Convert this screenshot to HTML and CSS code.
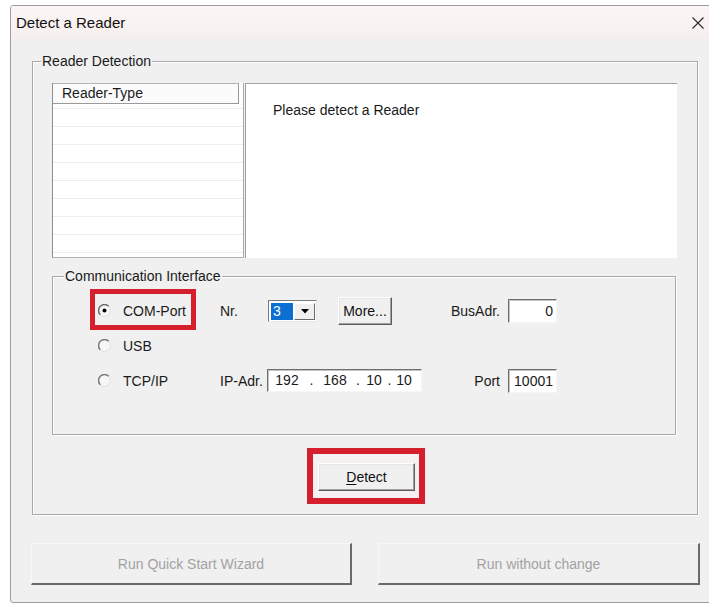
FILE: index.html
```html
<!DOCTYPE html>
<html lang="en">
<head>
<meta charset="utf-8">
<title>Detect a Reader</title>
<link rel="stylesheet" href="styles.css">
</head>
<body>
<div class="window">
  <div class="titlebar">
    <span class="title">Detect a Reader</span>
    <svg class="close" width="12" height="12" viewBox="0 0 12 12"><path d="M0.5 0.5L11.5 11.5M11.5 0.5L0.5 11.5" stroke="#2b2b2b" stroke-width="1.1"/></svg>
  </div>
  <div class="client">
    <div class="group main-group">
      <span class="legend">Reader Detection</span>
      <div class="top-area">
        <div class="listview">
          <div class="lv-header">Reader-Type</div>
          <div class="lv-row first"></div>
          <div class="lv-row"></div>
          <div class="lv-row"></div>
          <div class="lv-row"></div>
          <div class="lv-row"></div>
          <div class="lv-row"></div>
          <div class="lv-row"></div>
          <div class="lv-row"></div>
          <div class="lv-row"></div>
        </div>
        <div class="info-panel">Please detect a Reader</div>
      </div>

      <div class="group comm-group">
        <span class="legend">Communication Interface</span>
        <div class="row">
          <label class="opt marked">
            <svg class="radio" width="13" height="13" viewBox="0 0 13 13"><circle cx="6.5" cy="6.5" r="6" fill="#f7f7f7"/><path d="M10.7 2.3A5.8 5.8 0 0 1 2.3 10.7" fill="none" stroke="#e0e0e0" stroke-width="1"/><path d="M2.3 10.7A5.8 5.8 0 0 1 10.7 2.3" fill="none" stroke="#6c6c6c" stroke-width="1.5"/><circle cx="6.5" cy="6.5" r="2" fill="#000"/></svg>
            COM-Port
          </label>
          <span class="lbl">Nr.</span>
          <div class="combo">
            <span class="combo-value">3</span>
            <span class="combo-btn"><svg width="8" height="5" viewBox="0 0 8 5"><path d="M0 0H8L4 4.5Z" fill="#000"/></svg></span>
          </div>
          <button class="btn more">More...</button>
          <div class="right-field">
            <span class="lbl-r">BusAdr.</span>
            <div class="edit num">0</div>
          </div>
        </div>
        <div class="row">
          <label class="opt">
            <svg class="radio" width="13" height="13" viewBox="0 0 13 13"><circle cx="6.5" cy="6.5" r="6" fill="#f7f7f7"/><path d="M10.7 2.3A5.8 5.8 0 0 1 2.3 10.7" fill="none" stroke="#e0e0e0" stroke-width="1"/><path d="M2.3 10.7A5.8 5.8 0 0 1 10.7 2.3" fill="none" stroke="#7a7a7a" stroke-width="1.5"/></svg>
            USB
          </label>
        </div>
        <div class="row">
          <label class="opt">
            <svg class="radio" width="13" height="13" viewBox="0 0 13 13"><circle cx="6.5" cy="6.5" r="6" fill="#f7f7f7"/><path d="M10.7 2.3A5.8 5.8 0 0 1 2.3 10.7" fill="none" stroke="#e0e0e0" stroke-width="1"/><path d="M2.3 10.7A5.8 5.8 0 0 1 10.7 2.3" fill="none" stroke="#7a7a7a" stroke-width="1.5"/></svg>
            TCP/IP
          </label>
          <span class="lbl">IP-Adr.</span>
          <div class="edit ip">
            <span class="seg s1">192</span><span class="dot d1">.</span><span class="seg s2">168</span><span class="dot d2">.</span><span class="seg s3">10</span><span class="dot d3">.</span><span class="seg s4">10</span>
          </div>
          <div class="right-field">
            <span class="lbl-r">Port</span>
            <div class="edit num">10001</div>
          </div>
        </div>
      </div>

      <div class="detect-mark">
        <button class="btn detect"><u>D</u>etect</button>
      </div>
    </div>

    <div class="actions">
      <button class="btn wide" disabled>Run Quick Start Wizard</button>
      <button class="btn wide second" disabled>Run without change</button>
    </div>
  </div>
</div>
</body>
</html>
```

FILE: styles.css
```css
*,
*::before,
*::after {
  box-sizing: border-box;
}

html,
body {
  margin: 0;
  padding: 0;
}

body {
  width: 709px;
  height: 605px;
  overflow: hidden;
  background: #ffffff;
  font-family: "Liberation Sans", Arial, sans-serif;
  font-size: 14px;
  color: #1a1a1a;
}

/* dialog frame */
.window {
  margin: 5px 0 0 10px;
  width: 722px;
  height: 598px;
  border: 1px solid #9c9c9c;
  border-radius: 3px 3px 0 3px;
  background: #f0f0f0;
  overflow: hidden;
}

.titlebar {
  height: 33px;
  display: flex;
  align-items: center;
  padding: 0 27px 0 5px;
  background: linear-gradient(#fbf5f4, #f6efee);
}

.title {
  font-size: 15px;
  color: #111;
}

.close {
  margin-left: auto;
}

.client {
  padding: 22px 0 0 21px;
}

/* etched group boxes */
.group {
  position: relative;
  border: 1px solid #a9a9a9;
  box-shadow: inset 1px 1px 0 #ffffff, 1px 1px 0 #ffffff;
}

.legend {
  position: absolute;
  top: -9px;
  line-height: 16px;
  padding: 0 1px;
  background: #f0f0f0;
}

.main-group {
  width: 666px;
  height: 454px;
  padding: 21px 20px 0 19px;
  display: flex;
  flex-direction: column;
}

.main-group > .legend {
  left: 8px;
}

.top-area {
  display: flex;
  gap: 1px;
  height: 175px;
}

/* reader list */
.listview {
  width: 192px;
  display: flex;
  flex-direction: column;
  background: #ffffff;
  border-left: 1px solid #8e8e8e;
  border-right: 1px solid #a8a8a8;
  border-bottom: 1px solid #b4b4b4;
  overflow: hidden;
}

.lv-header {
  flex: none;
  width: 186px;
  height: 21px;
  padding-left: 9px;
  line-height: 19px;
  background: #fbfbfb;
  border-top: 1px solid #b4b4b4;
  border-right: 1px solid #9a9a9a;
  border-bottom: 1px solid #9a9a9a;
}

.lv-row {
  flex: none;
  height: 18px;
  border-bottom: 1px solid #ececec;
}

.lv-row.first {
  height: 5px;
}

.info-panel {
  flex: 1;
  padding: 18px 0 0 27px;
  line-height: 16px;
  background: #ffffff;
  border-top: 1px solid #a0a0a0;
  border-left: 1px solid #a0a0a0;
}

/* communication settings */
.comm-group {
  width: 624px;
  height: 159px;
  margin-top: 18px;
  padding: 16px 118px 0 0;
}

.comm-group > .legend {
  left: 11px;
}

.row {
  height: 35px;
  display: flex;
  align-items: center;
  padding-left: 45px;
}

.opt {
  position: relative;
  width: 122px;
  height: 35px;
  display: flex;
  align-items: center;
}

.radio {
  flex: none;
  margin-right: 12px;
}

.opt.marked::before {
  content: "";
  position: absolute;
  left: -8px;
  top: -4px;
  width: 106px;
  height: 41px;
  border: 5px solid #d61f2c;
}

.lbl {
  width: 47px;
}

.combo {
  width: 49px;
  height: 22px;
  margin-left: 1px;
  display: flex;
  padding: 2px 1px 1px 2px;
  background: #ffffff;
  border-top: 1px solid #7a7a7a;
  border-left: 1px solid #7a7a7a;
  border-right: 1px solid #e8e8e8;
  border-bottom: 1px solid #e8e8e8;
}

.combo-value {
  width: 22px;
  padding-left: 2px;
  line-height: 17px;
  color: #ffffff;
  background: #0a6fd2;
}

.combo-btn {
  flex: 1;
  display: flex;
  align-items: center;
  justify-content: center;
  margin-left: 1px;
  background: #f0f0f0;
  border: 1px solid;
  border-color: #ffffff #6a6a6a #6a6a6a #ffffff;
}

/* push buttons */
.btn {
  font: inherit;
  padding: 0;
  color: #111;
  background: #f0f0f0;
  border: 1px solid;
  border-color: #ffffff #5e5e5e #5e5e5e #ffffff;
  box-shadow: inset -1px -1px 0 #a0a0a0, inset 1px 1px 0 #e6e6e6;
}

.more {
  width: 54px;
  height: 28px;
  margin-left: 21px;
}

.right-field {
  margin-left: auto;
  display: flex;
  align-items: center;
}

.lbl-r {
  margin-right: 8px;
}

.edit {
  height: 24px;
  background: #ffffff;
  border-top: 1px solid #6e6e6e;
  border-left: 1px solid #6e6e6e;
  border-right: 1px solid #f6f6f6;
  border-bottom: 1px solid #f6f6f6;
  box-shadow: inset 1px 1px 0 #c4c4c4;
  line-height: 22px;
}

.num {
  width: 49px;
  text-align: right;
  padding-right: 3px;
}

.ip {
  width: 155px;
  height: 23px;
  display: flex;
  padding-left: 1px;
  line-height: 21px;
}

.seg,
.dot {
  text-align: center;
}

.s1 { width: 36px; }
.d1 { width: 13px; }
.s2 { width: 34px; }
.d2 { width: 12px; }
.s3 { width: 20px; }
.d3 { width: 11px; }
.s4 { width: 18px; }

/* detect action */
.detect-mark {
  align-self: center;
  margin: 13px 0 0 3px;
  padding: 9px 4px 7px 5px;
  border: 6px solid #d61f2c;
  background: #f5f1f1;
}

.detect {
  display: block;
  width: 97px;
  height: 28px;
}

.detect u {
  text-underline-offset: 2px;
}

.actions {
  display: flex;
  gap: 26px;
  margin: 28px 0 0 -1px;
}

.wide {
  width: 321px;
  height: 42px;
  color: #a2a2a2;
  border-color: #f8f8f8 #6a6a6a #6a6a6a #f8f8f8;
  border-width: 1px 2px 2px 1px;
  box-shadow: none;
}

.wide.second {
  width: 322px;
}
```
